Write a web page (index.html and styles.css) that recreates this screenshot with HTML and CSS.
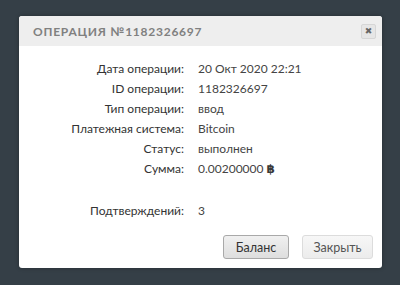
FILE: index.html
```html
<!DOCTYPE html>
<html>
<head>
<meta charset="utf-8">
<link rel="stylesheet" href="styles.css">
</head>
<body>
<div class="dialog">
  <div class="dialog-head">
    <span class="dialog-title">Операция №1182326697</span>
    <button class="close-btn">&#x2716;</button>
  </div>
  <div class="dialog-body">
    <div class="rows">
      <div class="row"><span class="label">Дата операции:</span><span class="value">20 Окт 2020 22:21</span></div>
      <div class="row"><span class="label">ID операции:</span><span class="value">1182326697</span></div>
      <div class="row"><span class="label">Тип операции:</span><span class="value">ввод</span></div>
      <div class="row"><span class="label">Платежная система:</span><span class="value">Bitcoin</span></div>
      <div class="row"><span class="label">Статус:</span><span class="value">выполнен</span></div>
      <div class="row"><span class="label">Сумма:</span><span class="value">0.00200000 <b class="btc">&#x0E3F;</b></span></div>
    </div>
    <div class="rows confirm">
      <div class="row"><span class="label">Подтверждений:</span><span class="value">3</span></div>
    </div>
  </div>
  <div class="dialog-foot">
    <button class="btn btn-main">Баланс</button>
    <button class="btn btn-light">Закрыть</button>
  </div>
</div>
</body>
</html>
```
FILE: styles.css
```css
html, body {
  margin: 0;
  padding: 0;
  background: #353f47;
  width: 400px;
  height: 285px;
  overflow: hidden;
  font-family: Lato, "Noto Sans", sans-serif;
}
body {
  padding: 16px 18px 0 19px;
  box-sizing: border-box;
}
.dialog {
  width: 363px;
  height: 252px;
  background: #fff;
  border-radius: 3px;
  box-shadow: 0 0 4px rgba(0,0,0,0.3);
  display: flex;
  flex-direction: column;
  overflow: hidden;
}
.dialog-head {
  height: 30px;
  background: #eeeeee;
  display: flex;
  align-items: center;
  justify-content: space-between;
  padding: 0 6px 0 14px;
}
.dialog-title {
  text-transform: uppercase;
  color: #808080;
  font-size: 12px;
  font-weight: 700;
  letter-spacing: 0.75px;
  padding-top: 0;
}
.close-btn {
  width: 15px;
  height: 15px;
  padding: 0;
  border: 1px solid #d6d6d6;
  border-radius: 2px;
  background: #e6e6e6;
  color: #666;
  font-size: 9px;
  line-height: 13px;
  font-family: "DejaVu Sans", sans-serif;
  text-align: center;
}
.dialog-body {
  padding-top: 12px;
  flex: 1;
}
.rows {
  display: flex;
  flex-direction: column;
}
.row {
  display: grid;
  grid-template-columns: 165px 1fr;
  column-gap: 14px;
  height: 20px;
  align-items: center;
  font-size: 12px;
}
.label {
  text-align: right;
  color: #333;
}
.value {
  color: #444;
}
.btc {
  font-family: "DejaVu Sans", sans-serif;
  font-weight: 700;
  font-size: 12px;
  color: #3a3a3a;
}
.confirm {
  margin-top: 22px;
}
.dialog-foot {
  display: flex;
  justify-content: flex-end;
  gap: 13px;
  padding: 0 9px 9px 0;
}
.btn {
  height: 24px;
  border-radius: 3px;
  font-family: Lato, "Noto Sans", sans-serif;
  font-size: 12.5px;
  padding: 0;
}
.btn-main {
  width: 66px;
  background: linear-gradient(#f0f0f0, #dedede);
  border: 1px solid #a9a9a9;
  color: #333;
}
.btn-light {
  width: 71px;
  background: linear-gradient(#f7f7f7, #ececec);
  border: 1px solid #dcdcdc;
  color: #555;
}
```
